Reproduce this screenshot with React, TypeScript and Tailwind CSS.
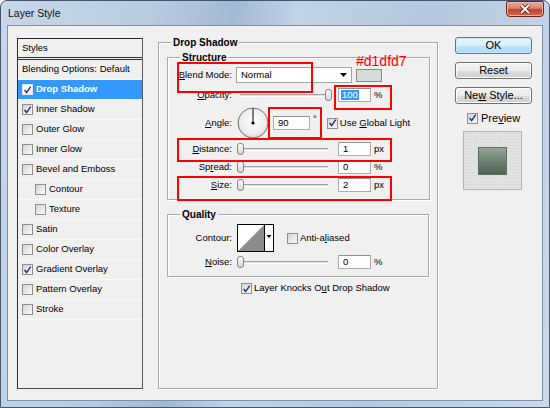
import React from 'react';

const CheckMark = () => (
  <svg width="10" height="10" viewBox="0 0 10 10" className="block">
    <path d="M1.8 5 L4 7.8 L8.6 1.2" fill="none" stroke="#1f2a8a" strokeWidth="1.5" />
  </svg>
);

function Box({ checked = false, selected = false }: { checked?: boolean; selected?: boolean }) {
  return (
    <span
      className={`flex h-[11px] w-[11px] shrink-0 items-center justify-center border ${
        selected ? 'border-[#dbe8fb] bg-white' : 'border-[#8f8f8f] bg-[linear-gradient(135deg,#d4d4d4,#fbfbfb)]'
      }`}
    >
      {checked && <CheckMark />}
    </span>
  );
}

const styleRows = [
  { label: 'Drop Shadow', checked: true, selected: true },
  { label: 'Inner Shadow', checked: true },
  { label: 'Outer Glow' },
  { label: 'Inner Glow' },
  { label: 'Bevel and Emboss' },
  { label: 'Contour', indent: true },
  { label: 'Texture', indent: true },
  { label: 'Satin' },
  { label: 'Color Overlay' },
  { label: 'Gradient Overlay', checked: true },
  { label: 'Pattern Overlay' },
  { label: 'Stroke' },
];

function Row({ label, className = '', children }: { label: React.ReactNode; className?: string; children: React.ReactNode }) {
  return (
    <div className={`flex items-center ${className}`}>
      <span className="w-[64px] text-right">{label}</span>
      <div className="ml-[4px] flex h-full items-center">{children}</div>
    </div>
  );
}

function Field({ children, w = 'w-[33px]', pl = 'pl-[4px]' }: { children: React.ReactNode; w?: string; pl?: string }) {
  return (
    <span className={`flex h-[14px] ${w} ${pl} items-center border border-[#abadb3] border-t-[#8e9196] bg-white leading-none`}>
      {children}
    </span>
  );
}

function Slider({ right = false }: { right?: boolean }) {
  return (
    <div className="relative flex h-[14px] w-[98px] items-center">
      <div className="ml-[4px] h-[3px] w-[88px] border-y border-t-[#a0a0a0] border-b-white bg-[#e0e0e0]" />
      <span
        className={`absolute top-[1px] h-[12px] w-[7px] rounded-[3px] border border-[#858585] bg-[linear-gradient(#fdfdfd,#d6d6d6)] ${
          right ? 'left-[89px]' : 'left-[1px]'
        }`}
      />
    </div>
  );
}

const U = ({ children }: { children: React.ReactNode }) => <u className="underline underline-offset-1">{children}</u>;

function Legend({ children }: { children: React.ReactNode }) {
  return (
    <span className="-mt-[7px] ml-[12px] block w-fit bg-[#f0f0f0] px-[2px] text-[10px] font-bold leading-[13px]">
      {children}
    </span>
  );
}

function Button({ children, primary = false }: { children: React.ReactNode; primary?: boolean }) {
  return (
    <div
      className={`flex h-[17px] w-[77px] items-center justify-center rounded-[3px] border text-[11px] ${
        primary
          ? 'border-[#3c7fb1] bg-[linear-gradient(#eaf6fd_0%,#d9f0fc_50%,#bee6fd_51%,#a7d9f5_100%)] shadow-[inset_0_0_0_1px_#c6ecfd]'
          : 'border-[#707070] bg-[linear-gradient(#f2f2f2_0%,#ebebeb_50%,#dddddd_51%,#cfcfcf_100%)] shadow-[inset_0_0_0_1px_#fcfcfc]'
      }`}
    >
      {children}
    </div>
  );
}

export default function App() {
  return (
    <div className="relative h-[408px] w-[550px] overflow-hidden rounded-t-[7px] border border-[#44566d] bg-[linear-gradient(100deg,#c8d7e9_0%,#b9cbdf_25%,#a4b9d2_38%,#c1d2e5_48%,#b6c8dd_70%,#cbd9e9_100%)] font-['Liberation_Sans',Arial,sans-serif] text-[9.5px] text-black">
      {/* title bar */}
      <div className="flex h-[24px] items-start justify-between">
        <span className="mt-[6px] ml-[7px] text-[10.5px] leading-[12px] text-[#111]">Layer Style</span>
        <div className="mr-[5px] flex h-[16px] w-[38px] items-center justify-center rounded-b-[4px] rounded-t-[2px] border border-[#6b2418] bg-[linear-gradient(#e9ab9c_0%,#d9826f_45%,#c2402a_55%,#d8644b_100%)] shadow-[inset_0_0_0_1px_#f0b4a6]">
          <svg width="12" height="10" viewBox="0 0 12 10">
            <path d="M2 1 L10 9 M10 1 L2 9" stroke="#5a1a10" strokeWidth="3.4" />
            <path d="M2 1 L10 9 M10 1 L2 9" stroke="#fff" strokeWidth="1.8" />
          </svg>
        </div>
      </div>

      {/* client area */}
      <div className="ml-[6px] flex h-[376px] w-[536px] items-start border border-[#7d92aa] bg-[#f0f0f0]">
        {/* styles list */}
        <div className="ml-[9px] mt-[12px] h-[351px] w-[126px] border border-[#2a2a2a] border-r-[#5a5a5a] border-b-[#4a4a4a]">
          <div className="flex h-[21px] items-center border-b-[3px] border-double border-[#333] pl-[4px] pt-[1px]">Styles</div>
          <div className="flex h-[20px] items-center border-b border-[#fafafa] pl-[4px]">Blending Options: Default</div>
          {styleRows.map((r) => (
            <div
              key={r.label}
              className={`flex h-[20px] items-center gap-[3px] border-b border-[#fafafa] ${r.indent ? 'pl-[17px]' : 'pl-[4px]'} ${
                r.selected ? 'bg-[#3399ff] font-bold text-white' : ''
              }`}
            >
              <Box checked={r.checked} selected={r.selected} />
              <span>{r.label}</span>
            </div>
          ))}
        </div>

        {/* drop shadow group */}
        <div className="ml-[15px] mt-[16px] h-[347px] w-[280px] border border-[#a9a9a9] shadow-[inset_1px_1px_0_#fff,1px_1px_0_#fff]">
          <Legend>Drop Shadow</Legend>

          {/* structure */}
          <div className="ml-[8px] mt-[8px] w-[263px] border border-[#a9a9a9] pb-[7px] shadow-[inset_1px_1px_0_#fff,1px_1px_0_#fff]">
            <Legend>Structure</Legend>
            <Row label={<><U>B</U>lend Mode:</>} className="mt-[3px] h-[16px]">
              <span className="flex h-[16px] w-[116px] items-center justify-between border border-[#a3a3a3] bg-white pl-[4px] pr-[4px]">
                Normal
                <svg width="7" height="4" viewBox="0 0 7 4">
                  <path d="M0 0 H7 L3.5 4 Z" fill="#000" />
                </svg>
              </span>
              <span className="ml-[4px] h-[13px] w-[26px] border border-[#8a8a8a] bg-[#d1dfd7]" />
            </Row>
            <Row label={<><U>O</U>pacity:</>} className="mt-[5px] h-[14px]">
              <Slider right />
              <span className="ml-[4px]">
                <Field pl="pl-[2px]">
                  <span className="bg-[#3399ff] px-[1px] text-white">100</span>
                </Field>
              </span>
              <span className="ml-[3px]">%</span>
            </Row>
            <Row label={<><U>A</U>ngle:</>} className="mt-[5px] h-[32px]">
              <svg width="32" height="32" viewBox="0 0 32 32" className="ml-[1px]">
                <defs>
                  <radialGradient id="dial" cx="50%" cy="45%" r="55%">
                    <stop offset="0%" stopColor="#ffffff" />
                    <stop offset="80%" stopColor="#ececec" />
                    <stop offset="100%" stopColor="#cfcfcf" />
                  </radialGradient>
                </defs>
                <circle cx="16" cy="16" r="15" fill="url(#dial)" stroke="#707070" />
                <line x1="16" y1="16" x2="16" y2="1.5" stroke="#000" strokeWidth="1" />
                <circle cx="16" cy="16" r="1.6" fill="#000" />
              </svg>
              <span className="ml-[4px]">
                <Field w="w-[37px]">90</Field>
              </span>
              <span className="ml-[3px] mb-[8px]">°</span>
              <span className="ml-[10px] flex items-center gap-[2px]">
                <Box checked />
                <span>
                  Use <U>G</U>lobal Light
                </span>
              </span>
            </Row>
            <Row label={<><U>D</U>istance:</>} className="mt-[3px] h-[14px]">
              <Slider />
              <span className="ml-[4px]">
                <Field>1</Field>
              </span>
              <span className="ml-[3px]">px</span>
            </Row>
            <Row label={<>Sp<U>r</U>ead:</>} className="mt-[4px] h-[14px]">
              <Slider />
              <span className="ml-[4px]">
                <Field>0</Field>
              </span>
              <span className="ml-[3px]">%</span>
            </Row>
            <Row label={<><U>S</U>ize:</>} className="mt-[4px] h-[14px]">
              <Slider />
              <span className="ml-[4px]">
                <Field>2</Field>
              </span>
              <span className="ml-[3px]">px</span>
            </Row>
          </div>

          {/* quality */}
          <div className="ml-[8px] mt-[14px] w-[262px] border border-[#a9a9a9] pb-[7px] shadow-[inset_1px_1px_0_#fff,1px_1px_0_#fff]">
            <Legend>Quality</Legend>
            <Row label="Contour:" className="mt-[3px] h-[28px]">
              <svg width="37" height="28" viewBox="0 0 37 28" className="ml-[1px]">
                <rect x="0.5" y="0.5" width="36" height="27" fill="#fff" stroke="#000" />
                <path d="M1 27 L27 1 L27 27 Z" fill="#8c8c8c" />
                <line x1="27.5" y1="0" x2="27.5" y2="28" stroke="#000" />
                <path d="M29.5 11 H34.5 L32 14 Z" fill="#000" />
              </svg>
              <span className="ml-[13px] flex items-center gap-[2px]">
                <Box />
                <span>
                  Anti-a<U>l</U>iased
                </span>
              </span>
            </Row>
            <Row label={<><U>N</U>oise:</>} className="mt-[3px] h-[14px]">
              <Slider />
              <span className="ml-[4px]">
                <Field>0</Field>
              </span>
              <span className="ml-[3px]">%</span>
            </Row>
          </div>

          <div className="mt-[5px] flex h-[13px] items-center gap-[2px] pl-[82px]">
            <Box checked />
            <span>
              Layer Knocks O<U>u</U>t Drop Shadow
            </span>
          </div>
        </div>

        {/* buttons */}
        <div className="ml-[17px] mt-[11px] flex w-[77px] flex-col">
          <Button primary>OK</Button>
          <div className="mt-[8px]">
            <Button>Reset</Button>
          </div>
          <div className="mt-[8px]">
            <Button>
              Ne<U>w</U>&nbsp;Style...
            </Button>
          </div>
          <div className="mt-[8px] ml-[12px] flex h-[12px] items-center gap-[3px] text-[11px]">
            <Box checked />
            <span>
              Pre<U>v</U>iew
            </span>
          </div>
          <div className="ml-[8px] mt-[7px] flex h-[59px] w-[59px] items-center justify-center border border-[#b4b4b4] bg-[#e2e2e2] bg-[radial-gradient(#d0d0d0_0.8px,transparent_0.8px)] bg-[length:3px_3px]">
            <div className="h-[28px] w-[29px] border border-[#5d6e62] bg-[linear-gradient(#93a698,#6e8274_50%,#4f6254)]" />
          </div>
        </div>
      </div>

      {/* red annotation marks */}
      <div className="absolute left-[176px] top-[61px] h-[31px] w-[136px] border-2 border-[#ff0000]" />
      <div className="absolute left-[333px] top-[84px] h-[25px] w-[58px] border-2 border-[#ff0000]" />
      <div className="absolute left-[267px] top-[106px] h-[32px] w-[54px] border-2 border-[#ff0000]" />
      <div className="absolute left-[176px] top-[137px] h-[24px] w-[215px] border-2 border-[#ff0000]" />
      <div className="absolute left-[176px] top-[175px] h-[25px] w-[215px] border-2 border-[#ff0000]" />
      <span className="absolute left-[355px] top-[52px] text-[14px] leading-[16px] text-[#ff0000]">#d1dfd7</span>
    </div>
  );
}
